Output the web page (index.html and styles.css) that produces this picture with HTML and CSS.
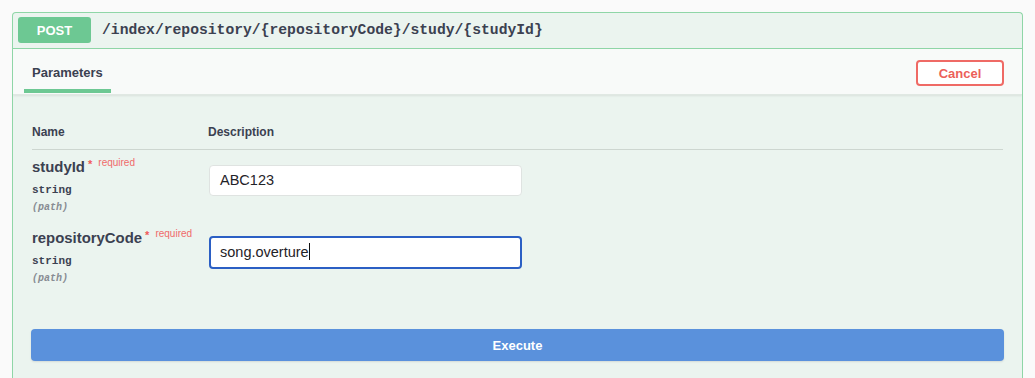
FILE: index.html
```html
<!DOCTYPE html>
<html>
<head>
<meta charset="utf-8">
<link rel="stylesheet" href="styles.css">
</head>
<body>
<div class="opblock">
  <div class="summary">
    <span class="method">POST</span>
    <span class="path">/index/repository/{repositoryCode}/study/{studyId}</span>
  </div>
  <div class="section-header">
    <div class="tab">Parameters</div>
    <button class="cancel">Cancel</button>
  </div>
  <div class="params">
    <div class="thead">
      <div class="col-name">Name</div>
      <div class="col-desc">Description</div>
    </div>
    <div class="row">
      <div class="col-name">
        <div class="pname">studyId<span class="star">&nbsp;*</span><span class="req">required</span></div>
        <div class="ptype">string</div>
        <div class="pin">(path)</div>
      </div>
      <div class="col-desc">
        <div class="input">ABC123</div>
      </div>
    </div>
    <div class="row">
      <div class="col-name">
        <div class="pname">repositoryCode<span class="star">&nbsp;*</span><span class="req">required</span></div>
        <div class="ptype">string</div>
        <div class="pin">(path)</div>
      </div>
      <div class="col-desc">
        <div class="input focused">song.overture<span class="caret"></span></div>
      </div>
    </div>
  </div>
  <div class="execute-wrap">
    <button class="execute">Execute</button>
  </div>
</div>
</body>
</html>
```

FILE: styles.css
```css
html, body {
  margin: 0;
  padding: 0;
  background: #fafafa;
  font-family: "Liberation Sans", Arial, sans-serif;
  color: #3b4151;
}

.opblock {
  margin: 12px 12px 0 12px;
  border: 1px solid #8fd6a7;
  border-bottom: none;
  border-radius: 4px 4px 0 0;
  background: #ebf4ef;
  height: 366px;
  box-sizing: border-box;
  overflow: hidden;
}

.summary {
  display: flex;
  align-items: center;
  padding: 4px 5px 5px 5px;
  border-bottom: 1px solid #8fd6a7;
}

.method {
  display: inline-flex;
  align-items: center;
  justify-content: center;
  width: 73px;
  height: 26px;
  background: #6dc893;
  color: #fff;
  font-weight: bold;
  font-size: 13px;
  border-radius: 3px;
}

.path {
  margin-left: 11px;
  font-family: "Liberation Mono", "Courier New", monospace;
  font-weight: bold;
  font-size: 14.7px;
  color: #3b4151;
}

.section-header {
  display: flex;
  align-items: center;
  justify-content: space-between;
  height: 45px;
  padding: 0 18px 0 11px;
  background: #f8faf9;
  box-shadow: 0 1px 2px rgba(0, 0, 0, 0.08);
  border-bottom: 1px solid #e0e8e3;
}

.tab {
  align-self: flex-end;
  padding: 2px 8px 0 8px;
  height: 23px;
  line-height: 14px;
  font-size: 13px;
  font-weight: bold;
  border-bottom: 4px solid #6dc893;
  box-sizing: content-box;
  margin-bottom: 1px;
}

.cancel {
  width: 88px;
  height: 26px;
  border: 2px solid #ef6a65;
  border-radius: 4px;
  background: #fff;
  color: #ec5f59;
  font-family: "Liberation Sans", Arial, sans-serif;
  font-weight: bold;
  font-size: 13px;
  padding: 0;
  margin-top: 3px;
}

.params {
  padding: 30px 19px 0 19px;
}

.thead {
  display: flex;
  font-size: 12px;
  font-weight: bold;
  line-height: 14px;
  padding-bottom: 10px;
  border-bottom: 1px solid #cdd6d0;
}

.col-name {
  width: 176px;
  flex: none;
}

.col-desc {
  flex: 1;
}

.row {
  display: flex;
  padding: 8px 0 5px 0;
}

.row + .row {
  padding-top: 7px;
}

.pname {
  font-size: 14.9px;
  font-weight: bold;
  line-height: 18px;
  white-space: nowrap;
}

.star {
  color: #f05a5a;
  font-size: 11px;
  position: relative;
  top: -4px;
}

.req {
  color: #f06a6a;
  font-size: 10px;
  font-weight: normal;
  position: relative;
  top: -6px;
  margin-left: 6px;
}

.ptype {
  font-family: "Liberation Mono", "Courier New", monospace;
  font-weight: bold;
  font-size: 11px;
  line-height: 18px;
  margin-top: 3px;
}

.pin {
  font-family: "Liberation Mono", "Courier New", monospace;
  font-style: italic;
  font-weight: bold;
  font-size: 10px;
  line-height: 18px;
  color: #888c93;
}

.input {
  width: 313px;
  height: 31px;
  margin-top: 7px;
  margin-left: 1px;
  box-sizing: border-box;
  border: 1px solid #dfe3e1;
  border-radius: 4px;
  background: #fff;
  font-size: 14.5px;
  line-height: 29px;
  padding: 0 10px;
  color: #1f2328;
}

.input.focused {
  height: 33px;
  border: 2px solid #2b5fc4;
  line-height: 29px;
  padding: 0 9px;
}

.caret {
  display: inline-block;
  width: 1px;
  height: 17px;
  background: #111;
  vertical-align: -3px;
}

.execute-wrap {
  padding: 36px 18px 0 18px;
}

.execute {
  display: block;
  width: 100%;
  height: 32px;
  border: none;
  border-radius: 4px;
  background: #5a91dc;
  color: #fff;
  font-family: "Liberation Sans", Arial, sans-serif;
  font-weight: bold;
  font-size: 13px;
  box-shadow: 0 1px 2px rgba(0, 0, 0, 0.1);
}
```
